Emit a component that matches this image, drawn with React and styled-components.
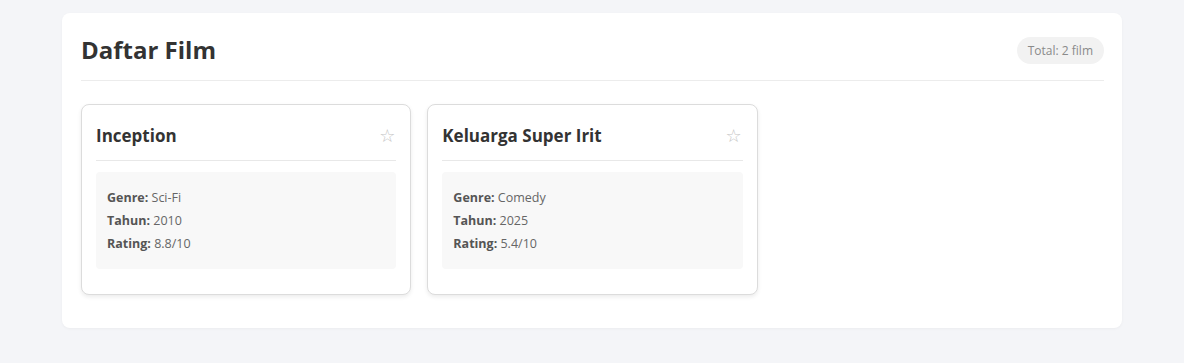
import styled, { createGlobalStyle } from 'styled-components';

const GlobalStyle = createGlobalStyle`
  body {
    margin: 0;
    background: #f4f5f8;
    font-family: "Open Sans", "Noto Sans", sans-serif;
    color: #333;
  }
`;

const Page = styled.div`
  padding: 13px 0 36px;
`;

const Panel = styled.section`
  width: 1060px;
  margin: 0 auto;
  box-sizing: border-box;
  padding: 20px 18px 33px 19px;
  background: #fff;
  border-radius: 8px;
  box-shadow: 0 1px 3px rgba(0, 0, 0, 0.04);
`;

const PanelHeader = styled.div`
  display: flex;
  align-items: center;
  justify-content: space-between;
  padding-bottom: 13px;
  border-bottom: 1px solid #ececec;
`;

const Title = styled.h1`
  margin: 0;
  font-size: 24px;
  line-height: 34px;
  font-weight: 700;
  color: #333;
`;

const Badge = styled.span`
  padding: 5px 11px;
  border-radius: 14px;
  background: #f2f2f2;
  color: #8a8a8a;
  font-size: 12px;
  line-height: 17px;
`;

const Grid = styled.div`
  display: grid;
  grid-template-columns: repeat(3, 1fr);
  gap: 16px;
  margin-top: 23px;
`;

const Card = styled.article`
  border: 1px solid #dcdcdc;
  border-radius: 8px;
  padding: 15px 14px;
  box-shadow: 0 2px 4px rgba(0, 0, 0, 0.08);
  background: #fff;
`;

const CardHeader = styled.div`
  display: flex;
  align-items: center;
  justify-content: space-between;
  padding-bottom: 8px;
  border-bottom: 1px solid #e8e8e8;
`;

const CardTitle = styled.h3`
  margin: 0;
  font-size: 17px;
  line-height: 32px;
  font-weight: 700;
  color: #333;
`;

const Star = styled.button`
  border: none;
  background: none;
  padding: 0 1px 0 0;
  font-size: 18px;
  line-height: 1;
  color: #c4c4c4;
  cursor: pointer;
  font-family: "DejaVu Sans", sans-serif;
`;

const Info = styled.div`
  margin: 11px 0 10px;
  padding: 14px 11px;
  background: #f8f8f8;
  border-radius: 4px;
`;

const Line = styled.p`
  margin: 0;
  font-size: 12.5px;
  line-height: 23px;
  color: #666;
`;

const Label = styled.strong`
  color: #555;
`;

const films = [
  { title: 'Inception', genre: 'Sci-Fi', year: 2010, rating: 8.8 },
  { title: 'Keluarga Super Irit', genre: 'Comedy', year: 2025, rating: 5.4 },
];

const App = () => (
  <Page>
    <GlobalStyle />
    <Panel>
      <PanelHeader>
        <Title>Daftar Film</Title>
        <Badge>Total: {films.length} film</Badge>
      </PanelHeader>
      <Grid>
        {films.map(f => (
          <Card key={f.title}>
            <CardHeader>
              <CardTitle>{f.title}</CardTitle>
              <Star aria-label="favorit">☆</Star>
            </CardHeader>
            <Info>
              <Line><Label>Genre:</Label> {f.genre}</Line>
              <Line><Label>Tahun:</Label> {f.year}</Line>
              <Line><Label>Rating:</Label> {f.rating}/10</Line>
            </Info>
          </Card>
        ))}
      </Grid>
    </Panel>
  </Page>
);

export default App;
